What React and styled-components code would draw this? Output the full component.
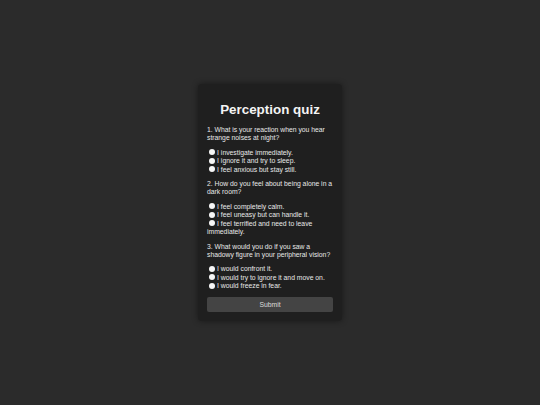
import React, { useState } from "react";
import styled, { createGlobalStyle } from "styled-components";

const GlobalStyle = createGlobalStyle`
  html, body {
    margin: 0;
    padding: 0;
    height: 100%;
  }
  body {
    background: #2b2b2b;
    font-family: "Liberation Sans", Arial, sans-serif;
  }
  #root {
    height: 100%;
  }
`;

// quiz content
const QUESTIONS = [
  {
    id: "q1",
    text: "1. What is your reaction when you hear strange noises at night?",
    options: [
      "I investigate immediately.",
      "I ignore it and try to sleep.",
      "I feel anxious but stay still.",
    ],
  },
  {
    id: "q2",
    text: "2. How do you feel about being alone in a dark room?",
    options: [
      "I feel completely calm.",
      "I feel uneasy but can handle it.",
      "I feel terrified and need to leave immediately.",
    ],
  },
  {
    id: "q3",
    text: "3. What would you do if you saw a shadowy figure in your peripheral vision?",
    options: [
      "I would confront it.",
      "I would try to ignore it and move on.",
      "I would freeze in fear.",
    ],
  },
];

export default function App() {
  const [answers, setAnswers] = useState({});

  const pick = (qid, idx) => setAnswers((prev) => ({ ...prev, [qid]: idx }));

  return (
    <Page>
      <GlobalStyle />
      <Card onSubmit={(e) => e.preventDefault()}>
        <Title>Perception quiz</Title>
        {QUESTIONS.map((q) => (
          <Question key={q.id}>
            <QuestionText>{q.text}</QuestionText>
            <Options>
              {q.options.map((opt, i) => (
                <Option key={opt}>
                  <Radio
                    type="radio"
                    name={q.id}
                    checked={answers[q.id] === i}
                    onChange={() => pick(q.id, i)}
                  />
                  {opt}
                </Option>
              ))}
            </Options>
          </Question>
        ))}
        <SubmitButton type="submit">Submit</SubmitButton>
      </Card>
    </Page>
  );
}

const Page = styled.div`
  min-height: 100%;
  display: flex;
  align-items: center;
  justify-content: center;
`;

const Card = styled.form`
  box-sizing: border-box;
  width: 144px;
  padding: 8.5px 9px;
  background: #1f1f1f;
  border-radius: 4px;
  box-shadow: 0 0 6px rgba(0, 0, 0, 0.45);
  color: #e8e8e8;
  font-size: 6.8px;
  line-height: 8.4px;
`;

const Title = styled.h1`
  margin: 9px 0;
  font-size: 13.4px;
  line-height: 15.4px;
  font-weight: 700;
  text-align: center;
  color: #f4f4f4;
`;

const Question = styled.div`
  margin-bottom: 6.2px;
`;

const QuestionText = styled.p`
  margin: 0 0 6.6px;
  line-height: 8px;
`;

const Options = styled.div`
  display: flex;
  flex-direction: column;
`;

const Option = styled.label`
  display: block;
  cursor: pointer;
`;

const Radio = styled.input`
  appearance: none;
  display: inline-block;
  width: 6px;
  height: 6px;
  margin: 0 2.3px 0 1.8px;
  border-radius: 50%;
  background: #f6f6f6;
  vertical-align: -0.7px;
  cursor: pointer;

  &:checked {
    background: radial-gradient(circle, #1f1f1f 0 1.2px, #f6f6f6 1.4px);
  }
`;

const SubmitButton = styled.button`
  display: block;
  width: 100%;
  height: 15.5px;
  margin-top: 6.5px;
  padding: 0;
  border: none;
  border-radius: 2px;
  background: #444444;
  color: #dcdcdc;
  font-family: inherit;
  font-size: 6.8px;
  cursor: pointer;
`;
